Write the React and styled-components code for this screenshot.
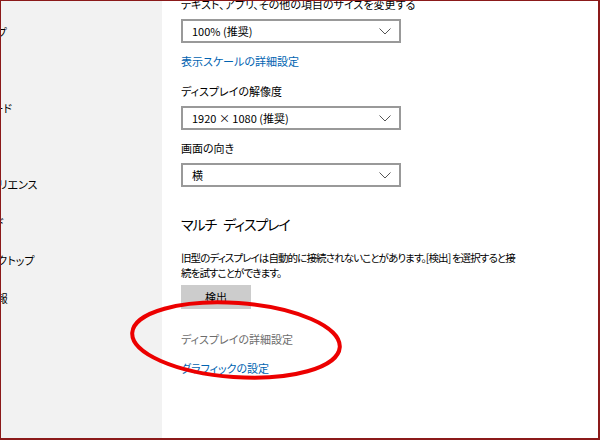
import * as React from 'react'
import styled, { createGlobalStyle } from 'styled-components'

const font = `"Noto Sans CJK JP", "Noto Sans", sans-serif`

const GlobalStyle = createGlobalStyle`
  html, body {
    margin: 0;
    padding: 0;
    background: #ffffff;
  }
  body {
    font-family: ${font};
    font-feature-settings: "palt";
  }
`

const sideItems = [
  '電源とスリープ',
  '記憶域',
  'タブレットモード',
  'マルチタスク',
  '共有エクスペリエンス',
  'クリップボード',
  'リモート デスクトップ',
  'バージョン情報',
]

function Chevron() {
  return (
    <svg width="12" height="7" viewBox="0 0 12 7">
      <polyline points="0.5,0.5 6,6 11.5,0.5" fill="none" stroke="#555" strokeWidth="1" />
    </svg>
  )
}

function Select({ value }) {
  return (
    <Dropdown>
      <span>{value}</span>
      <Chevron />
    </Dropdown>
  )
}

export default function App() {
  return (
    <>
      <GlobalStyle />
      <Frame>
        <Sidebar>
          {sideItems.map((s) => (
            <SideItem key={s}>{s}</SideItem>
          ))}
        </Sidebar>
        <Main>
          <Label $top={-5}>テキスト、アプリ、その他の項目のサイズを変更する</Label>
          <Select value="100% (推奨)" />
          <Link $top={10}>表示スケールの詳細設定</Link>
          <Label $top={14}>ディスプレイの解像度</Label>
          <Select value="1920 × 1080 (推奨)" />
          <Label $top={10}>画面の向き</Label>
          <Select value="横" />
          <Heading>マルチ ディスプレイ</Heading>
          <Para>
            旧型のディスプレイは自動的に接続されないことがあります。[検出] を選択すると接
            <br />
            続を試すことができます。
          </Para>
          <Button>検出</Button>
          <Muted>ディスプレイの詳細設定</Muted>
          <Link $top={13}>グラフィックの設定</Link>
        </Main>
        <Marker width="600" height="440" viewBox="0 0 600 440">
          <ellipse
            cx="236"
            cy="340"
            rx="104"
            ry="37"
            fill="none"
            stroke="#ec0000"
            strokeWidth="4"
            transform="rotate(4 236 340)"
          />
        </Marker>
      </Frame>
    </>
  )
}

const Frame = styled.div`
  position: relative;
  width: 600px;
  height: 440px;
  box-sizing: border-box;
  border-style: solid;
  border-color: #8b1a1a;
  border-width: 1px 2px 2px 1px;
  display: flex;
  overflow: hidden;
  color: #000;
`

const Sidebar = styled.div`
  width: 161px;
  flex: 0 0 161px;
  background: #f2f2f2;
  overflow: hidden;
  padding-top: 23px;
  box-sizing: border-box;
`

const SideItem = styled.div`
  height: 38px;
  line-height: 16px;
  font-size: 11px;
  margin-left: -65px;
  white-space: nowrap;
`

const Main = styled.div`
  flex: 1;
  padding-left: 19px;
  display: flex;
  flex-direction: column;
  align-items: flex-start;
`

const Label = styled.div`
  font-size: 11px;
  line-height: 16px;
  height: 16px;
  margin-top: ${(p) => p.$top}px;
  margin-bottom: 7px;
  white-space: nowrap;
`

const Link = styled(Label)`
  color: #0063b1;
  margin-bottom: 0;
`

const Dropdown = styled.div`
  width: 220px;
  height: 24px;
  box-sizing: border-box;
  border: 2px solid #999999;
  background: #fff;
  display: flex;
  align-items: center;
  justify-content: space-between;
  padding: 0 8px 0 9px;
  font-size: 11px;
`

const Heading = styled.div`
  font-size: 14px;
  line-height: 24px;
  letter-spacing: -1.1px;
  word-spacing: 5px;
  margin-top: 25px;
`

const Para = styled.div`
  font-size: 10.5px;
  line-height: 15px;
  letter-spacing: -0.9px;
  margin-top: 14px;
  white-space: nowrap;
`

const Button = styled.div`
  width: 70px;
  height: 24px;
  margin-top: 5px;
  background: #cccccc;
  font-size: 11px;
  display: flex;
  align-items: center;
  justify-content: center;
`

const Muted = styled(Label)`
  color: #6d6d6d;
  margin-top: 22px;
  margin-bottom: 0;
`

const Marker = styled.svg`
  position: absolute;
  left: -1px;
  top: -1px;
  pointer-events: none;
`
